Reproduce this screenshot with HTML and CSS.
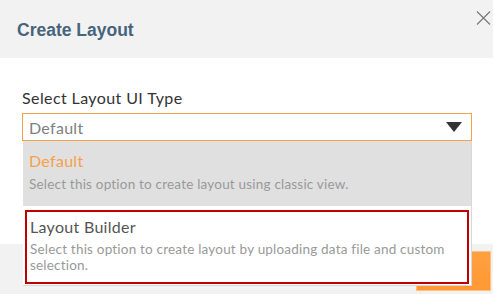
FILE: index.html
```html
<!DOCTYPE html>
<html>
<head>
<meta charset="utf-8">
<link rel="stylesheet" href="styles.css">
</head>
<body>
<div class="modal">
  <div class="header">
    <h1 class="title">Create Layout</h1>
    <button class="close" aria-label="Close">
      <svg width="15" height="14" viewBox="0 0 15 14"><path d="M1 0.5 L14 13.5 M14 0.5 L1 13.5" stroke="#777" stroke-width="1.1" fill="none"/></svg>
    </button>
  </div>
  <div class="content">
    <label class="label">Select Layout UI Type</label>
    <div class="select-wrap">
      <div class="select">
        <span class="value">Default</span>
        <svg class="caret" width="16" height="10" viewBox="0 0 16 10"><path d="M0 0 H16 L8 10 Z" fill="#333"/></svg>
      </div>
      <div class="dropdown">
        <div class="option active">
          <div class="opt-title">Default</div>
          <div class="opt-desc">Select this option to create layout using classic view.</div>
        </div>
        <div class="option highlighted">
          <div class="opt-title">Layout Builder</div>
          <div class="opt-desc">Select this option to create layout by uploading data file and custom selection.</div>
        </div>
      </div>
    </div>
  </div>
  <div class="footer">
    <button class="primary"></button>
  </div>
</div>
</body>
</html>
```
FILE: styles.css
```css
* { box-sizing: border-box; }
html, body { margin: 0; padding: 0; background: #fff; }
body { width: 493px; height: 294px; overflow: hidden; font-family: "Lato", "Open Sans", sans-serif; }
.modal { display: flex; flex-direction: column; height: 294px; }
.header {
  height: 58px; background: #f2f2f2; display: flex; justify-content: space-between; align-items: flex-start;
  padding: 0 2px 0 17px;
}
.title {
  margin: 19px 0 0; font-family: "Liberation Sans", Arial, sans-serif; font-weight: bold; font-size: 17.5px;
  color: #46647c; line-height: 22px;
}
.close { border: 0; background: none; padding: 0; margin-top: 11px; width: 15px; height: 14px; display: block; }
.close svg { display: block; }
.content { height: 186px; padding: 30px 21px 0 22px; }
.label { display: block; font-size: 16px; letter-spacing: 0.4px; color: #333; line-height: 20px; height: 25px; }
.select-wrap { position: relative; }
.select {
  height: 28px; border: 1px solid #f7a04a; display: flex; align-items: center; justify-content: space-between;
  padding: 0 9px 0 6px;
}
.value { font-size: 16px; letter-spacing: 0.3px; color: #808080; }
.caret { display: block; }
.dropdown {
  position: absolute; top: 28px; left: 1px; width: 449px; background: #fff;
  border-right: 1px solid #d8d8d8; border-bottom: 1px solid #d8d8d8; padding-bottom: 1px;
  z-index: 2;
}
.option { padding: 0 6px; }
.option.active { background: #e0e0e0; height: 65px; padding-top: 10px; }
.option.highlighted { margin: 4px 2px 0 2px; border: 2px solid #c00000; padding: 5px 20px 9px 3px; }
.opt-title { font-size: 16px; line-height: 20px; color: #555; letter-spacing: 0.3px; }
.active .opt-title { color: #f7a04a; }
.opt-desc { font-size: 13.5px; letter-spacing: 0.2px; line-height: 16px; color: #999; margin-top: 5px; }
.highlighted .opt-desc { margin-top: 4px; }
.footer { flex: 1; background: #f2f2f2; display: flex; justify-content: flex-end; align-items: flex-start; padding: 7px 2px 0 0; }
.primary {
  width: 75px; height: 40px; border: 1px solid #ffc080; background: linear-gradient(#ffa040, #ff9933); padding: 0;
}
```
